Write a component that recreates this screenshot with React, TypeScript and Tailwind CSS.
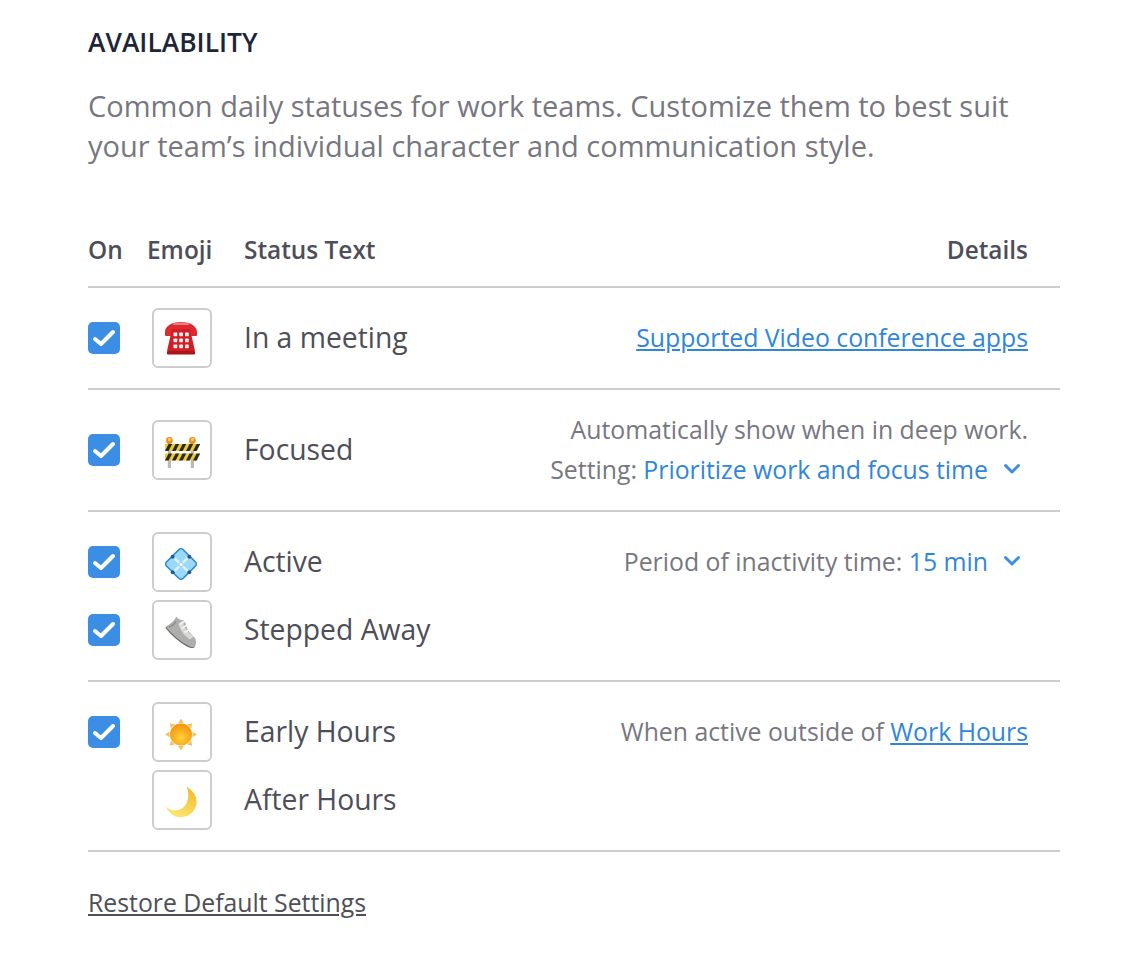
import type { ReactNode } from "react";

const FONT = "font-['Open_Sans','Noto_Sans',sans-serif]";

function Check() {
  return (
    <span className="flex h-8 w-8 shrink-0 items-center justify-center rounded-[5px] bg-[#3c8ee5]">
      <svg viewBox="0 0 32 32" className="h-8 w-8" fill="none" stroke="white" strokeWidth="4" strokeLinecap="round" strokeLinejoin="round">
        <polyline points="7,17 13,22 25,10" />
      </svg>
    </span>
  );
}

function Chevron() {
  return (
    <svg viewBox="0 0 18 12" className="mb-[6px] ml-[15px] mr-[7px] inline-block h-3 w-[18px]" fill="none" stroke="#3c8ee5" strokeWidth="3" strokeLinecap="round" strokeLinejoin="round">
      <polyline points="2.5,2.5 9,9 15.5,2.5" />
    </svg>
  );
}

function Phone() {
  return (
    <svg viewBox="0 0 36 36" className="h-9 w-9">
      <path d="M1 12C1 6 8 2 17 2s16 4 16 10v3c0 1-1 1-1 1h-5c-1 0-1-1-1-1v-3H8v3c0 1-1 1-1 1H2c-1 0-1-1-1-1z" fill="#dc2a30" />
      <path d="M8 9h18l5 22H3z" fill="#cf1f26" />
      <rect x="3" y="31" width="28" height="3.5" rx="0.8" fill="#a91419" />
      <path d="M9 3.5c5-1.500 11-1.500 16 0v1.500H9z" fill="#f27a7e" />
      {[9.5, 15.2, 21].map((x) =>
        [12.5, 18.5, 24.5].map((y) => <rect key={`${x}-${y}`} x={x} y={y} width="3.8" height="3.8" rx="0.7" fill="#fde9e9" />),
      )}
    </svg>
  );
}

function Barrier() {
  return (
    <svg viewBox="0 0 36 36" className="h-9 w-9">
      <rect x="3.800" y="11" width="3.200" height="25" fill="#b9b9b9" />
      <rect x="26.800" y="11" width="3.200" height="25" fill="#b9b9b9" />
      <circle cx="5.400" cy="8.500" r="3.400" fill="#f0901c" />
      <circle cx="28.400" cy="8.500" r="3.400" fill="#f0901c" />
      <circle cx="5.400" cy="7.500" r="1.500" fill="#ffd75e" />
      <circle cx="28.400" cy="7.500" r="1.500" fill="#ffd75e" />
      {[12, 21.500].map((y) => (
        <g key={y}>
          <rect x="1" y={y} width="32.500" height="7" fill="#efc93a" />
          {[1, 8, 15, 22, 29].map((x) => (
            <path key={x} d={`M${x} ${y + 7}l3.600 -7h3.600l-3.600 7z`} fill="#2b2a22" />
          ))}
        </g>
      ))}
    </svg>
  );
}

function Diamond() {
  return (
    <svg viewBox="0 0 36 36" className="h-9 w-9">
      <path d="M15 5.500c1-1 3-1 4 0L31.500 18c1 1 1 3 0 4L19 34.500c-1 1-3 1-4 0L2.500 22c-1-1-1-3 0-4z" fill="#9bd9f7" stroke="#2f86cf" strokeWidth="1.600" strokeLinejoin="round" />
      <path d="M9 12.700 25 28.300M25 12.700 9 28.300" stroke="#d9f3ff" strokeWidth="2.400" />
      <circle cx="17" cy="20.500" r="2.200" fill="#f2fbff" stroke="#7cc0ea" strokeWidth="0.800" />
      <circle cx="8.700" cy="12.700" r="2" fill="#1c5a98" />
      <circle cx="25.300" cy="12.700" r="2" fill="#1c5a98" />
      <circle cx="8.700" cy="28.300" r="2" fill="#1c5a98" />
      <circle cx="25.300" cy="28.300" r="2" fill="#1c5a98" />
    </svg>
  );
}

function Shoe() {
  return (
    <svg viewBox="0 0 36 36" className="h-9 w-9">
      <path d="M2 14.500c4-2 8-5.500 10.500-10 1 2 3 3.500 6 3.500 2 1 3 2.500 3.500 5 1 5 5 9 9 13 1.500 2.500 1.500 5.500 0 8-2 1.500-4 1-6.500-.5C16 29 8 22 2 14.500z" fill="#aeaeac" />
      <path d="M2 14.500C8 22 16 29 24.500 33.500c2.500 1.500 4.500 2 6.500.5l-.5 1.500c-2.500 1-5 .5-7.500-1C15 30 7 23 1.500 16z" fill="#6d6d6b" />
      <path d="M18.500 8.500c1 6 5 12 11 16l-3.500 3c-5.500-3.500-9.500-9-11.500-15.500z" fill="#d9d9d6" />
      <path d="M15.500 12.500l5-3M17.500 16.500l5-3.200M20.500 20.500l5-3.200" stroke="#f4f4f2" strokeWidth="1.600" />
      <path d="M5 15c2-.5 5-2.500 7-5.500" stroke="#8c8c8a" strokeWidth="1.400" fill="none" />
    </svg>
  );
}

function Sun() {
  return (
    <svg viewBox="0 0 36 36" className="h-9 w-9">
      <defs>
        <radialGradient id="sun" cx="50%" cy="65%" r="60%">
          <stop offset="0" stopColor="#ffd23a" />
          <stop offset="1" stopColor="#f4960f" />
        </radialGradient>
      </defs>
      {[0, 45, 90, 135, 180, 225, 270, 315].map((a) => (
        <path key={a} d="M17 4.500l2.800 4.500h-5.600z" fill="#efc266" transform={`rotate(${a} 17 20.500)`} />
      ))}
      <circle cx="17" cy="20.500" r="11" fill="url(#sun)" />
    </svg>
  );
}

function Moon() {
  return (
    <svg viewBox="0 0 36 36" className="h-9 w-9">
      <defs>
        <linearGradient id="moon" x1="0.800" y1="0" x2="0.300" y2="1">
          <stop offset="0" stopColor="#f2b92a" />
          <stop offset="1" stopColor="#fde873" />
        </linearGradient>
      </defs>
      <path d="M22.700 4.700C30 9 33.500 16 32.500 22 31 30 24 35.500 16 35.300 10 35 5 31 1.700 24.700 6 28.500 12 29.500 17 27 24 23.500 26 13 22.700 4.700z" fill="url(#moon)" />
    </svg>
  );
}

function EmojiBox({ children }: { children: ReactNode }) {
  return (
    <span className="flex h-[60px] w-[60px] shrink-0 items-center justify-center rounded-[6px] border-2 border-[#cdcdcd] bg-white">
      {children}
    </span>
  );
}

function StatusLine({
  on = true,
  icon,
  text,
  tall,
  children,
}: {
  on?: boolean;
  icon: ReactNode;
  text: string;
  tall?: boolean;
  children?: ReactNode;
}) {
  return (
    <div className={`flex items-center ${tall ? "h-20" : "h-[60px]"}`}>
      <span className="w-8 shrink-0">{on && <Check />}</span>
      <span className="ml-8">
        <EmojiBox>{icon}</EmojiBox>
      </span>
      <span className="mb-[2px] ml-8 text-[28.3px] leading-10 text-[#4e4e58]">{text}</span>
      {children && <div className="mb-[2px] ml-auto pr-8 text-right text-[24.8px] leading-10 text-[#77777f]">{children}</div>}
    </div>
  );
}

export default function App() {
  return (
    <div className={`${FONT} min-h-[960px] w-[1148px] bg-white pl-[88px] pr-[88px] pt-[24px]`}>
      <h2 className="text-[26.4px] font-semibold leading-9 text-[#1d2539]">AVAILABILITY</h2>
      <p className="mt-[26px] whitespace-nowrap text-[29px] leading-10 text-[#77777f]">
        Common daily statuses for work teams. Customize them to best suit
        <br />
        your team’s individual character and communication style.
      </p>

      <div className="mt-[64px] flex h-[40px] items-center text-[24.4px] font-semibold leading-10 text-[#4e4e58]">
        <span className="w-[59px]">On</span>
        <span className="w-[97px]">Emoji</span>
        <span>Status Text</span>
        <span className="ml-auto pr-8">Details</span>
      </div>

      <div className="mt-[16px] border-t-2 border-[#cdcdcd]">
        <div className="border-b-2 border-[#cdcdcd] py-5">
          <StatusLine icon={<Phone />} text="In a meeting">
            <a className="text-[#2f86dc] underline">Supported Video conference apps</a>
          </StatusLine>
        </div>

        <div className="border-b-2 border-[#cdcdcd] py-5">
          <StatusLine tall icon={<Barrier />} text="Focused">
            <div>Automatically show when in deep work.</div>
            <div>
              Setting: <span className="text-[#2f86dc]">Prioritize work and focus time</span>
              <Chevron />
            </div>
          </StatusLine>
        </div>

        <div className="flex flex-col gap-2 border-b-2 border-[#cdcdcd] py-5">
          <StatusLine icon={<Diamond />} text="Active">
            Period of inactivity time: <span className="text-[#2f86dc]">15 min</span>
            <Chevron />
          </StatusLine>
          <StatusLine icon={<Shoe />} text="Stepped Away" />
        </div>

        <div className="flex flex-col gap-2 border-b-2 border-[#cdcdcd] py-5">
          <StatusLine icon={<Sun />} text="Early Hours">
            When active outside of <a className="text-[#2f86dc] underline">Work Hours</a>
          </StatusLine>
          <StatusLine on={false} icon={<Moon />} text="After Hours" />
        </div>
      </div>

      <a className="mt-[30px] inline-block text-[24.8px] leading-10 text-[#4e4e58] underline">Restore Default Settings</a>
    </div>
  );
}
